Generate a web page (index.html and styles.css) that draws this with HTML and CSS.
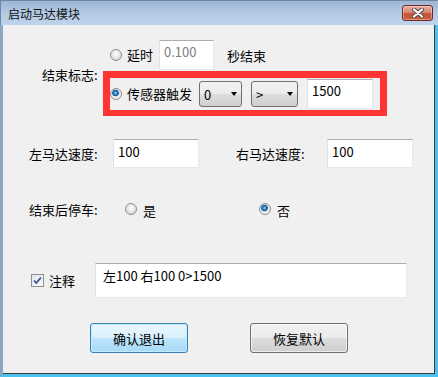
FILE: index.html
```html
<!DOCTYPE html>
<html lang="zh-CN">
<head>
  <meta charset="UTF-8">
  <title>启动马达模块</title>
  <link rel="stylesheet" href="styles.css">
</head>
<body>

  <div class="window">
    <!-- 标题栏 -->
    <div class="titlebar">
      <span class="title">启动马达模块</span>
      <button class="close-btn" title="关闭">
        <svg width="14" height="10" viewBox="0 0 14 10">
          <path d="M3 1.5 L11 8.5 M11 1.5 L3 8.5" stroke="#4a4a4a" stroke-width="4" stroke-linecap="round"/>
          <path d="M3 1.5 L11 8.5 M11 1.5 L3 8.5" stroke="#fff" stroke-width="2.2" stroke-linecap="round"/>
        </svg>
      </button>
    </div>

    <div class="client">
      <!-- 结束标志 -->
      <div class="flag-row">
        <div class="flag-label">结束标志:</div>
        <div class="flag-options">
          <div class="opt delay-opt">
            <span class="radio"></span>
            <span class="opt-text delay-text">延时</span>
            <div class="edit delay-edit disabled">0.100</div>
            <span class="unit">秒结束</span>
          </div>
          <div class="opt sensor-opt">
            <span class="radio checked"></span>
            <span class="opt-text sensor-text">传感器触发</span>
            <div class="combo port-combo"><span>0</span><i class="arrow"></i></div>
            <div class="combo op-combo"><span>&gt;</span><i class="arrow"></i></div>
            <div class="edit threshold-edit">1500</div>
          </div>
        </div>
      </div>

      <!-- 马达速度 -->
      <div class="speed-row">
        <span class="speed-label">左马达速度:</span>
        <div class="edit speed-edit">100</div>
        <span class="speed-label right">右马达速度:</span>
        <div class="edit speed-edit">100</div>
      </div>

      <!-- 结束后停车 -->
      <div class="stop-row">
        <span class="stop-label">结束后停车:</span>
        <div class="stop-choice yes">
          <span class="radio"></span><span class="choice-text">是</span>
        </div>
        <div class="stop-choice">
          <span class="radio checked"></span><span class="choice-text">否</span>
        </div>
      </div>

      <!-- 注释 -->
      <div class="note-row">
        <div class="note-check">
          <span class="checkbox">
            <svg width="11" height="11" viewBox="0 0 11 11">
              <path d="M2 5.5 L4.3 8 L9 2.5" fill="none" stroke="#3d4f86" stroke-width="1.8"/>
            </svg>
          </span>
          <span class="note-text">注释</span>
        </div>
        <div class="edit note-edit">左100 右100 0&gt;1500</div>
      </div>

      <!-- 按钮 -->
      <div class="button-row">
        <button class="btn default">确认退出</button>
        <button class="btn">恢复默认</button>
      </div>
    </div>
  </div>

</body>
</html>
```

FILE: styles.css
```css
* { box-sizing: border-box; }
body {
  margin: 0;
  font-family: "Noto Sans CJK SC", "Microsoft YaHei", sans-serif;
  font-size: 13px;
  color: #000;
  background: #fff;
}

/* 窗口框架 */
.window {
  width: 438px;
  height: 377px;
  display: flex;
  flex-direction: column;
}
.titlebar {
  height: 25px;
  flex: none;
  display: flex;
  align-items: center;
  justify-content: space-between;
  padding: 0 5px 0 7px;
  background: linear-gradient(#9fb6d3, #b6cce6 60%, #bed4ed);
  border-top: 1px solid #6f86a6;
  border-left: 1px solid #6f86a6;
}
.title { font-size: 12px; color: #111; }
.close-btn {
  width: 31px;
  height: 16px;
  padding: 0;
  display: flex;
  align-items: center;
  justify-content: center;
  border: 1px solid #6e2a22;
  border-radius: 3px;
  background: linear-gradient(#e7ab9e, #d98a79 45%, #c5533c 55%, #c9603f);
  box-shadow: inset 0 0 0 1px rgba(255,255,255,0.35);
}

.client {
  flex: 1;
  background: #f0f0f0;
  border-left: 3px solid #8aa6c9;
  border-right: 3px solid #4cc3ef;
  border-bottom: 3px solid #4cc3ef;
  box-shadow: inset -1px -1px 0 #3a3a3a;
  padding: 15px 0 0 26px;
}

/* 通用控件 */
.radio {
  flex: none;
  width: 12px;
  height: 12px;
  border-radius: 50%;
  border: 1px solid #8c8e90;
  background: radial-gradient(circle at 50% 40%, #ffffff, #e6e6e6 50%, #c9c9c9);
}
.radio.checked {
  background: radial-gradient(circle at 45% 40%, #9fdcff 0, #2d86c6 1.6px, #135a92 3px, #dcdcdc 3.6px, #f4f4f4 4.6px, #cfcfcf 100%);
}
.edit {
  background: #fff;
  border: 1px solid;
  border-color: #abadb3 #e3e9ef #e3e9ef #e2e3ea;
  padding: 3px 4px 0;
  line-height: 16px;
  white-space: nowrap;
}
.edit.disabled { color: #7d7d7d; }
.combo {
  flex: none;
  height: 26px;
  display: flex;
  align-items: center;
  justify-content: space-between;
  padding: 0 4px 0 4px;
  border: 1px solid #707070;
  border-radius: 3px;
  background: linear-gradient(#f2f2f2, #ebebeb 50%, #dddddd 50%, #cfcfcf);
}
.arrow {
  width: 0;
  height: 0;
  border-left: 3.5px solid transparent;
  border-right: 3.5px solid transparent;
  border-top: 4px solid #000;
}

/* 结束标志 */
.flag-row { display: flex; align-items: flex-start; }
.flag-label { width: 61px; margin: 27px 0 0 13px; line-height: 16px; }
.flag-options { display: flex; flex-direction: column; }
.opt { display: flex; align-items: center; }
.delay-opt { height: 30px; padding-left: 7px; }
.opt-text { margin-left: 5px; line-height: 16px; }
.delay-text { width: 32px; }
.delay-edit { width: 55px; height: 30px; }
.unit { margin-left: 13px; }
.sensor-opt {
  margin-top: 1px;
  width: 284px;
  height: 45px;
  border: 7px solid #ff3434;
  border-bottom-width: 6px;
}
.sensor-text { width: 72px; }
.port-combo { width: 43px; }
.op-combo { width: 47px; margin-left: 9px; }
.threshold-edit { width: 66px; height: 30px; margin-left: 9px; }

/* 马达速度 */
.speed-row { display: flex; align-items: center; margin-top: 23px; }
.speed-label { width: 84px; }
.speed-label.right { width: 91px; margin-left: 37px; }
.speed-edit { width: 86px; height: 29px; padding-top: 4px; }

/* 结束后停车 */
.stop-row { display: flex; align-items: center; height: 16px; margin-top: 33px; }
.stop-label { width: 96px; }
.stop-choice { display: flex; align-items: center; }
.stop-choice.yes { width: 134px; }
.choice-text { margin-left: 6px; margin-top: 3px; }

/* 注释 */
.note-row { display: flex; align-items: flex-start; margin-top: 46px; }
.note-check { width: 66px; display: flex; align-items: center; margin-top: 8px; padding-left: 2px; }
.checkbox {
  width: 13px;
  height: 13px;
  display: flex;
  align-items: center;
  justify-content: center;
  border: 1px solid #8f8f8f;
  background: linear-gradient(135deg, #dfe6f0, #f7f9fc);
}
.note-text { margin-left: 5px; }
.note-edit { width: 312px; height: 35px; padding: 4px 0 0 7px; }

/* 按钮 */
.button-row { display: flex; margin-top: 25px; padding-left: 61px; gap: 62px; }
.btn {
  width: 98px;
  height: 30px;
  font: inherit;
  color: #000;
  border: 1px solid #707070;
  border-radius: 3px;
  background: linear-gradient(#f2f2f2, #ebebeb 50%, #dddddd 50%, #cfcfcf);
  box-shadow: inset 0 0 0 1px rgba(255,255,255,0.6);
}
.btn.default {
  border-color: #3c7fb1;
  background: linear-gradient(#eaf6fd, #d9f0fc 50%, #bee6fd 50%, #a7d9f5);
  box-shadow: inset 0 0 0 1px #c2ecfc;
}
```
